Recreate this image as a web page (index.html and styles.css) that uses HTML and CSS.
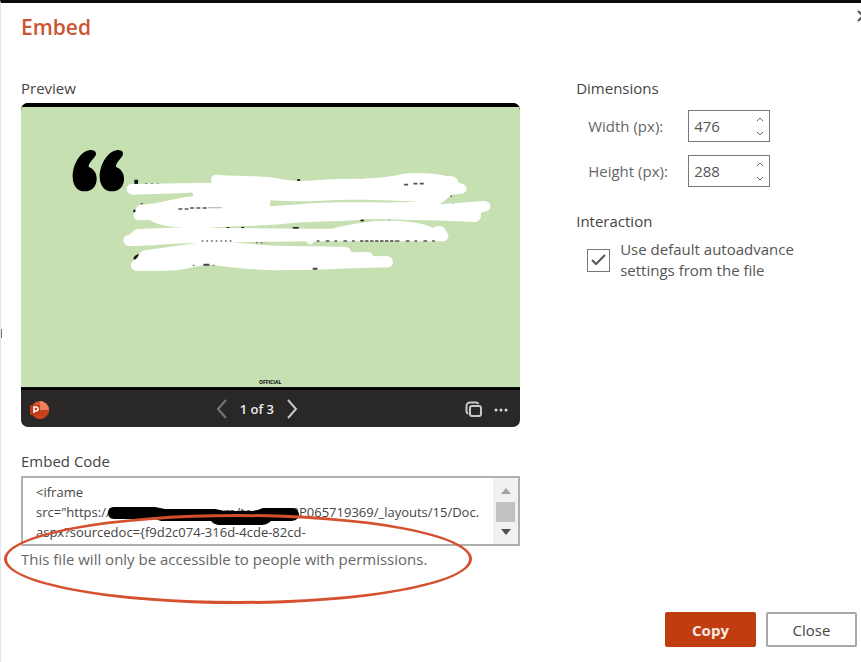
FILE: index.html
```html
<!DOCTYPE html>
<html lang="en">
<head>
    <meta charset="UTF-8">
    <meta name="viewport" content="width=device-width, initial-scale=1.0">
    <title>Embed</title>
    <link rel="stylesheet" href="styles.css">
</head>
<body>
    <div class="dialog">
        <span class="edge-mark"></span>
        <button class="dismiss" aria-label="Dismiss">
            <svg width="12" height="12" viewBox="0 0 12 12"><path d="M1 1l10 10M11 1L1 11"/></svg>
        </button>

        <h1>Embed</h1>

        <div class="content">
            <div class="left">
                <h2>Preview</h2>
                <div class="player">
                    <svg class="slide" viewBox="0 0 499 287">
                        <rect width="499" height="287" fill="#000"/>
                        <rect y="4" width="499" height="280" fill="#c6e0b1"/>
                        <!-- quote mark -->
                        <g transform="translate(-21 -103) scale(.3333)">
                            <path d="M270 450C284 449 292 458 286 468C277 480 265 490 266 501C281 506 290 520 290 536C290 559 275 574 254 574C232 574 218 557 218 530C218 495 239 454 270 450Z"/>
                            <path d="M352 450C366 449 373 458 367 468C358 480 347 490 348 501C363 506 372 520 372 536C372 559 357 574 336 574C314 574 299 557 299 530C299 495 321 454 352 450Z"/>
                        </g>
                        <g transform="translate(89 57) scale(.3333)">
                            <!-- text left showing at the edges -->
                            <path stroke="#111" stroke-width="14" d="M73 66h11"/>
                            <path stroke="#111" stroke-width="8" d="M561 62h9M350 205h8M394 205h8M751 180h10M70 153h6"/>
                            <path stroke="#222" stroke-width="6" d="M548 204h18"/>
                            <path fill="none" stroke="#111" stroke-width="8" d="M74 298C74 292 78 288 88 286"/>
                            <path stroke="#555" stroke-width="4" stroke-dasharray="6 12" d="M105 71h45M145 97h100M92 131h8M305 206h8M752 58h8M834 179h6M1020 108h10M1026 131h8"/>
                            <!-- white marker -->
                            <path class="marker" d="M64 72L305 68C298 52 308 44 320 44C400 50 455 46 500 55C560 68 600 62 660 58C740 56 800 58 860 46C890 34 970 38 1010 48C1035 46 1045 56 1043 68C1075 70 1078 98 1053 101L1025 104L990 133L1122 123C1145 124 1148 150 1125 155C1118 156 1112 157 1112 160C1114 178 1105 186 1092 186C980 180 840 180 770 177C710 186 620 182 540 190C450 200 370 196 290 203L590 206L665 206C720 192 780 182 830 182C880 182 940 186 968 204C985 192 1005 200 1006 212C1020 222 1018 242 998 244L615 244L601 254L585 244L430 246L360 247C430 252 480 257 540 258L700 260C718 260 724 270 722 277L770 276C784 276 788 284 790 289L830 288C853 290 855 318 835 322C740 322 640 330 540 330C450 332 390 324 320 316C260 310 240 332 170 332L80 333C60 331 56 307 74 301C86 295 84 272 105 271L260 249C190 250 120 258 56 258C36 254 34 230 53 226C65 224 66 208 86 207L220 202C180 200 140 196 120 180L84 181C66 178 68 158 78 154C76 140 86 134 98 134C150 132 190 114 250 109L248 98L70 104C44 104 44 74 64 72Z"/>
                            <path fill="#c6e0b1" d="M481 121C560 128 640 120 720 119C800 118 860 122 930 124C860 130 800 126 700 127C620 126 540 136 480 139Z"/>
                            <path stroke="#555" stroke-width="5" stroke-dasharray="12 7" d="M882 74h16M910 71h36M205 147h30M240 144h54"/>
                            <path stroke="#aaa" stroke-width="3" d="M294 143h42"/>
                            <path stroke="#666" stroke-width="4" stroke-dasharray="5 9" d="M275 243h90M438 248h30M248 316h10M308 316h8"/>
                            <path stroke="#444" stroke-width="6" d="M280 314h18M608 326h14"/>
                            <path stroke="#555" stroke-width="5" stroke-dasharray="8 19 11 15" d="M620 243h120M860 243h130"/>
                            <path stroke="#444" stroke-width="5" stroke-dasharray="10 5" d="M750 243h110"/>
                        </g>
                        <text class="stamp" x="249" y="281">OFFICIAL</text>
                    </svg>
                    <div class="player-bar">
                        <svg class="logo" width="20" height="20" viewBox="0 0 20 20">
                            <circle cx="11" cy="11" r="9" fill="#d9532f"/>
                            <path d="M11 2a9 9 0 0 1 9 9h-9z" fill="#f0805c"/>
                            <path d="M2 11a9 9 0 0 0 18 0z" fill="#c8401c"/>
                            <rect x="1" y="6" width="10" height="10" rx="1" fill="#bf3a17"/>
                            <path d="M5 14V8h2a2 2 0 0 1 0 4H5" fill="none" stroke="#fff" stroke-width="1.5"/>
                        </svg>
                        <div class="pager">
                            <button class="prev" aria-label="Previous slide">
                                <svg width="12" height="20" viewBox="0 0 12 20"><path d="M10 1L2 10l8 9"/></svg>
                            </button>
                            <span>1 of 3</span>
                            <button class="next" aria-label="Next slide">
                                <svg width="12" height="20" viewBox="0 0 12 20"><path d="M2 1l8 9-8 9"/></svg>
                            </button>
                        </div>
                        <div class="tools">
                            <button aria-label="Copy slide">
                                <svg width="18" height="18" viewBox="0 0 18 18"><rect x="5" y="6" width="11" height="10" rx="2"/><path d="M3 14C2 13 1.500 12 1.500 11V6a3.500 3.500 0 0 1 3.500-3.500h6c1 0 2 .5 2.500 1.500"/></svg>
                            </button>
                            <button aria-label="More options">
                                <svg class="dots" width="14" height="18" viewBox="0 0 14 18"><circle cx="2" cy="10" r="1.500"/><circle cx="7" cy="10" r="1.500"/><circle cx="12" cy="10" r="1.500"/></svg>
                            </button>
                        </div>
                    </div>
                </div>

                <h2><label for="code">Embed Code</label></h2>
                <div class="code-area">
                    <div class="code-box">
                        <textarea id="code" readonly wrap="off">&lt;iframe
src="https://xxxxxxxxxxxxxx.com/teams/CBP065719369/_layouts/15/Doc.
aspx?sourcedoc={f9d2c074-316d-4cde-82cd-</textarea>
                        <div class="scrollbar">
                            <svg width="12" height="8" viewBox="0 0 12 8"><path d="M1 7l5-6 5 6z" fill="#a3a3a3"/></svg>
                            <span class="thumb"></span>
                            <svg width="12" height="8" viewBox="0 0 12 8"><path d="M1 1l5 6 5-6z" fill="#505050"/></svg>
                        </div>
                    </div>
                    <svg class="redaction" width="194" height="20" viewBox="0 0 194 20">
                        <path d="M7 2H48L58 4H108L118 6H148L156 3H184C194 3 195 15 185 16H164C160 20 156 20 152 20H114C108 20 106 18 104 16H54L48 14H7C-1 14-1 2 7 2Z"/>
                    </svg>
                    <span class="circle"></span>
                    <p class="note">This file will only be accessible to people with permissions.</p>
                </div>
            </div>

            <div class="right">
                <h2>Dimensions</h2>
                <div class="field">
                    <label for="width">Width (px):</label>
                    <div class="spinner">
                        <input type="number" id="width" value="476">
                        <div class="arrows">
                            <button aria-label="Increase width"><svg width="8" height="5" viewBox="0 0 8 5"><path d="M1 4l3-3 3 3"/></svg></button>
                            <button aria-label="Decrease width"><svg width="8" height="5" viewBox="0 0 8 5"><path d="M1 1l3 3 3-3"/></svg></button>
                        </div>
                    </div>
                </div>
                <div class="field">
                    <label for="height">Height (px):</label>
                    <div class="spinner">
                        <input type="number" id="height" value="288">
                        <div class="arrows">
                            <button aria-label="Increase height"><svg width="8" height="5" viewBox="0 0 8 5"><path d="M1 4l3-3 3 3"/></svg></button>
                            <button aria-label="Decrease height"><svg width="8" height="5" viewBox="0 0 8 5"><path d="M1 1l3 3 3-3"/></svg></button>
                        </div>
                    </div>
                </div>

                <h2 class="interaction">Interaction</h2>
                <div class="check">
                    <span class="tick">
                        <input type="checkbox" id="autoadvance" checked>
                        <svg width="16" height="12" viewBox="0 0 16 12"><path d="M1 6l4 4 9-9"/></svg>
                    </span>
                    <label for="autoadvance">Use default autoadvance settings from the file</label>
                </div>
            </div>
        </div>

        <div class="buttons">
            <button class="copy">Copy</button>
            <button class="close">Close</button>
        </div>
    </div>
</body>
</html>
```
FILE: styles.css
```css
* {
    box-sizing: border-box;
}
body {
    margin: 0;
    font-family: "Open Sans", "Noto Sans", sans-serif;
    font-size: 15px;
    line-height: 20px;
    color: #555;
    background-color: #fff;
}
button {
    padding: 0;
    border: none;
    background: none;
    font-family: inherit;
    cursor: pointer;
}
svg {
    display: block;
}
.dialog {
    position: relative;
    min-height: 100vh;
    padding: 10px 4px 15px 20px;
    border-top: 3px solid #0c0a0b;
    border-left: 1px solid #e6e6e6;
    overflow: hidden;
}
.edge-mark {
    position: absolute;
    left: -1px;
    top: 326px;
    width: 2px;
    height: 9px;
    background-color: #777;
}
.dismiss {
    position: absolute;
    top: 7px;
    right: -8px;
}
.dismiss path {
    stroke: #555;
    stroke-width: 2;
}
h1 {
    margin: 0 0 37px;
    font-size: 21px;
    line-height: 28px;
    font-weight: 600;
    color: #cc5533;
}
h2 {
    margin: 0 0 5px;
    font-size: 15px;
    line-height: 20px;
    font-weight: 500;
    color: #444;
}
.content {
    display: grid;
    grid-template-columns: 16fr 9fr;
    gap: 56px;
}

/* preview */
.player {
    margin-bottom: 24px;
    border-radius: 7px;
    background-color: #292827;
    overflow: hidden;
}
.slide {
    width: 100%;
    height: auto;
}
.marker {
    fill: #fff;
}
.stamp {
    font-size: 5px;
    font-weight: 700;
    text-anchor: middle;
}
.player-bar {
    display: grid;
    grid-template-columns: 8fr auto 9fr;
    align-items: center;
    height: 37px;
    padding: 0 12px 0 8px;
}
.pager {
    display: flex;
    align-items: center;
    gap: 12px;
    font-weight: 600;
    font-size: 13px;
    color: #eee;
}
.player-bar button svg {
    fill: none;
    stroke: #c8c8c8;
    stroke-width: 2;
}
.player-bar .prev svg {
    stroke: #777;
}
.tools {
    display: flex;
    justify-content: flex-end;
    gap: 11px;
}
.player-bar .tools .dots {
    fill: #ddd;
    stroke: none;
}

/* embed code */
.code-area {
    position: relative;
}
.code-box {
    display: flex;
    height: 70px;
    border: 2px solid #b0b0b0;
}
textarea {
    flex: 1;
    min-width: 0;
    padding: 4px 0 0 13px;
    border: none;
    outline: none;
    resize: none;
    overflow: hidden;
    font-family: inherit;
    font-size: 13px;
    line-height: 20px;
    color: #444;
}
.scrollbar {
    display: flex;
    flex-direction: column;
    align-items: center;
    justify-content: space-between;
    width: 25px;
    padding: 9px 0 8px;
    background-color: #f1f1f1;
}
.thumb {
    width: 19px;
    height: 20px;
    background-color: #c1c1c1;
}
.redaction {
    position: absolute;
    top: 29px;
    left: 86px;
}
.circle {
    position: absolute;
    top: 38px;
    left: -17px;
    right: 48px;
    height: 90px;
    border: 3px solid #d4502e;
    border-radius: 50%;
    pointer-events: none;
}
.note {
    margin: 3px 0 0;
    color: #666;
}

/* settings */
.field {
    display: flex;
    align-items: center;
    margin: 12px 0 13px 12px;
}
.field + .field {
    margin-top: 0;
}
.field label {
    width: 100px;
    color: #666;
}
.spinner {
    display: flex;
    width: 82px;
    height: 32px;
    border: 1px solid #777;
}
.spinner input {
    flex: 1;
    min-width: 0;
    padding: 0 0 0 5px;
    border: none;
    outline: none;
    font-family: inherit;
    font-size: 15px;
    color: #555;
    appearance: textfield;
}
.spinner input::-webkit-inner-spin-button {
    display: none;
}
.arrows {
    display: flex;
    flex-direction: column;
    justify-content: center;
    gap: 9px;
    padding-right: 5px;
}
.arrows path {
    fill: none;
    stroke: #666;
    stroke-width: 1;
}
.interaction {
    margin: 24px 0 8px;
}
.check {
    display: flex;
    align-items: center;
    gap: 10px;
    margin-left: 11px;
}
.tick {
    display: grid;
    place-items: center;
}
.tick input,
.tick svg {
    grid-area: 1 / 1;
}
.tick input {
    width: 23px;
    height: 23px;
    margin: 0;
    border: 1px solid #777;
    appearance: none;
}
.tick svg {
    pointer-events: none;
}
.tick path {
    fill: none;
    stroke: #555;
    stroke-width: 2;
}
.check label {
    max-width: 190px;
    line-height: 21px;
}

/* footer */
.buttons {
    display: flex;
    justify-content: flex-end;
    gap: 10px;
    margin-top: 43px;
}
.buttons button {
    width: 91px;
    height: 35px;
    border-radius: 2px;
    font-size: 15px;
}
.copy {
    background-color: #bf3d0e;
    color: #fbe9e2;
    font-weight: 700;
}
.close {
    border: 2px solid #a8a8a8;
    background-color: #fff;
    color: #444;
    font-weight: 500;
}
```
